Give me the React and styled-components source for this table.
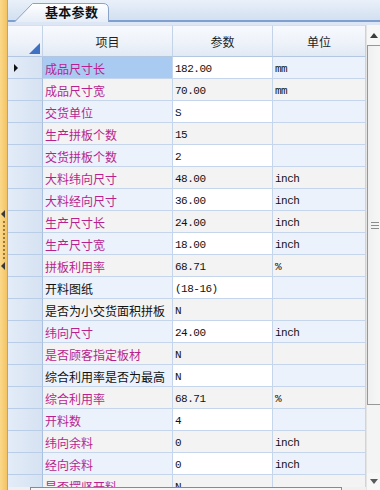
import React from "react";
import styled, { createGlobalStyle } from "styled-components";

const Global = createGlobalStyle`
  html, body { margin: 0; padding: 0; background: #fff; }
  body { font-family: "Noto Sans CJK SC", "Liberation Sans", sans-serif; }
`;

const Root = styled.div`
  width: 380px;
  height: 490px;
  display: flex;
  overflow: hidden;
`;

const Splitter = styled.div`
  flex: none;
  width: 7px;
  border-right: 1px solid #cfa24c;
  background: linear-gradient(to right, #fbd98a, #f3c363);
  display: flex;
  flex-direction: column;
  align-items: center;
  justify-content: center;
  gap: 3px;
  padding-bottom: 11px;
  box-sizing: content-box;
`;

const SplitArrow = styled.div`
  width: 0;
  height: 0;
  border-top: 4px solid transparent;
  border-bottom: 4px solid transparent;
  border-right: 4px solid #3a3a3a;
  margin-left: -1px;
`;

const Grip = styled.div`
  width: 0;
  height: 38px;
  border-left: 2px dotted #9a7a3a;
`;

const Main = styled.div`
  flex: none;
  width: 375px;
  display: flex;
  flex-direction: column;
`;

const TabStrip = styled.div`
  flex: none;
  height: 20px;
  border-bottom: 2px solid #7fa0cf;
  background: linear-gradient(to bottom, #e9f0f9, #d3e0f1);
  display: flex;
  align-items: flex-end;
  padding-left: 6px;
`;

const Tab = styled.div`
  position: relative;
  width: 96px;
  height: 19px;
  display: flex;
  align-items: center;
  padding-left: 31px;
  box-sizing: border-box;
  font-size: 13px;
  font-weight: 700;
  color: #111;
  margin-bottom: -1px;
`;

const TabShape = styled.svg`
  position: absolute;
  left: 0;
  top: 0;
  width: 96px;
  height: 20px;
`;

const TabLabel = styled.span`
  position: relative;
  line-height: 19px;
  letter-spacing: 0.3px;
`;

const Panel = styled.div`
  flex: 1;
  min-height: 0;
  display: flex;
  padding-top: 3px;
  background: #dce6f4;
`;

const GridWrap = styled.div`
  flex: none;
  width: 358px;
  display: flex;
  flex-direction: column;
  background: #fff;
`;

const GridBody = styled.div`
  flex: 1;
  min-height: 0;
  overflow: hidden;
  display: grid;
  grid-template-columns: 35px 130px 100px 93px;
  grid-auto-rows: 22px;
  grid-template-rows: 32px;
`;

const HeadCell = styled.div`
  box-sizing: border-box;
  border-right: 1px solid #c3d3e8;
  border-bottom: 1px solid #b3c7e1;
  border-top: 1px solid #d6e0ec;
  background: linear-gradient(to bottom, #f7f9fd 0%, #edf2f9 60%, #e1e9f4 100%);
  display: flex;
  align-items: center;
  justify-content: center;
  font-size: 12px;
  color: #1e1e1e;
  position: relative;
`;

const CornerMark = styled.div`
  position: absolute;
  right: 2px;
  bottom: 2px;
  width: 0;
  height: 0;
  border-left: 11px solid transparent;
  border-bottom: 11px solid #3f72c2;
`;

const Indicator = styled.div`
  box-sizing: border-box;
  border-right: 1px solid #a9c0de;
  border-bottom: 1px solid #b9cde6;
  background: linear-gradient(to right, #e3ecf8, #d6e2f2);
  display: flex;
  align-items: center;
  padding-left: 6px;
`;

const RowMark = styled.div`
  width: 0;
  height: 0;
  border-top: 4px solid transparent;
  border-bottom: 4px solid transparent;
  border-left: 4px solid #111;
`;

const Cell = styled.div`
  box-sizing: border-box;
  border-right: 1px solid #c5d6ec;
  border-bottom: 1px solid #c5d6ec;
  background: ${(p) => p.$bg};
  display: flex;
  align-items: center;
  padding-left: 2px;
  padding-top: 2px;
  white-space: nowrap;
  overflow: hidden;
`;

const NameText = styled.span`
  font-size: 12px;
  color: ${(p) => (p.$plain ? "#111" : "#b81f8f")};
  line-height: 1;
`;

const MonoText = styled.span`
  font-family: "Liberation Mono", "DejaVu Sans Mono", monospace;
  font-size: 11px;
  letter-spacing: -0.5px;
  color: #111;
`;

const HScroll = styled.div`
  flex: none;
  height: 3px;
  display: flex;
  background: #f0f0f0;
`;

const HThumb = styled.div`
  margin-left: 22px;
  width: 310px;
  border-top: 1px solid #8a8a8a;
  border-left: 1px solid #8a8a8a;
  border-right: 1px solid #8a8a8a;
  background: #f6f6f6;
`;

const VScroll = styled.div`
  flex: none;
  width: 17px;
  display: flex;
  flex-direction: column;
  background: #f2f2f2;
  border-left: 1px solid #e4e4e4;
  box-sizing: border-box;
`;

const ArrowBtn = styled.div`
  flex: none;
  height: ${(p) => p.$h}px;
  display: flex;
  align-items: center;
  justify-content: center;
  background: #f7f7f7;
`;

const Tri = styled.div`
  width: 0;
  height: 0;
  border-left: 4px solid transparent;
  border-right: 4px solid transparent;
  ${(p) =>
    p.$up
      ? "border-bottom: 5px solid #3c3c3c;"
      : "border-top: 5px solid #5a5a5a;"}
  margin-right: 2px;
`;

const Thumb = styled.div`
  flex: none;
  height: 360px;
  box-sizing: border-box;
  border: 1px solid #979797;
  border-right: none;
  background: linear-gradient(to right, #f0f0f0, #f8f8f8);
  display: flex;
  align-items: center;
  justify-content: center;
`;

const GripLines = styled.div`
  width: 8px;
  height: 5px;
  border-top: 1px solid #8c8c8c;
  border-bottom: 1px solid #8c8c8c;
  position: relative;
  margin-right: 2px;
  &::after {
    content: "";
    position: absolute;
    left: 0;
    right: 0;
    top: 2px;
    border-top: 1px solid #8c8c8c;
  }
`;

const Track = styled.div`
  flex: 1;
  background: #f4f4f4;
`;

const rows = [
  ["成品尺寸长", "182.00", "mm"],
  ["成品尺寸宽", "70.00", "mm"],
  ["交货单位", "S", ""],
  ["生产拼板个数", "15", ""],
  ["交货拼板个数", "2", ""],
  ["大料纬向尺寸", "48.00", "inch"],
  ["大料经向尺寸", "36.00", "inch"],
  ["生产尺寸长", "24.00", "inch"],
  ["生产尺寸宽", "18.00", "inch"],
  ["拼板利用率", "68.71", "%"],
  ["开料图纸", "(18-16)", "", true],
  ["是否为小交货面积拼板", "N", "", true],
  ["纬向尺寸", "24.00", "inch"],
  ["是否顾客指定板材", "N", ""],
  ["综合利用率是否为最高", "N", "", true],
  ["综合利用率", "68.71", "%"],
  ["开料数", "4", ""],
  ["纬向余料", "0", "inch"],
  ["经向余料", "0", "inch"],
  ["是否摆竖开料", "N", ""],
];

export default function App() {
  return (
    <>
      <Global />
      <Root>
        <Splitter>
          <SplitArrow />
          <Grip />
          <SplitArrow />
        </Splitter>
        <Main>
          <TabStrip>
            <Tab>
              <TabShape viewBox="0 0 96 20">
                <defs>
                  <linearGradient id="tabg" x1="0" y1="0" x2="0" y2="1">
                    <stop offset="0" stopColor="#ffffff" />
                    <stop offset="1" stopColor="#e6edf7" />
                  </linearGradient>
                </defs>
                <path
                  d="M0.5 20 L18.5 1.5 H89 Q94.5 1.5 94.5 7 V20"
                  fill="url(#tabg)"
                  stroke="#8aa3c6"
                  strokeWidth="1"
                />
              </TabShape>
              <TabLabel>基本参数</TabLabel>
            </Tab>
          </TabStrip>
          <Panel>
            <GridWrap>
              <GridBody>
                <HeadCell>
                  <CornerMark />
                </HeadCell>
                <HeadCell>项目</HeadCell>
                <HeadCell>参数</HeadCell>
                <HeadCell>单位</HeadCell>
                {rows.map(([name, val, unit, plain], i) => {
                  const odd = i % 2 === 0;
                  const side = odd ? "#ebf2fc" : "#f3f3f3";
                  const mid = odd ? "#ffffff" : "#f3f3f3";
                  const nameBg = i === 0 ? "#a9caf1" : side;
                  return (
                    <React.Fragment key={name}>
                      <Indicator>{i === 0 && <RowMark />}</Indicator>
                      <Cell $bg={nameBg}>
                        <NameText $plain={plain}>{name}</NameText>
                      </Cell>
                      <Cell $bg={mid}>
                        <MonoText>{val}</MonoText>
                      </Cell>
                      <Cell $bg={side}>
                        <MonoText>{unit}</MonoText>
                      </Cell>
                    </React.Fragment>
                  );
                })}
              </GridBody>
              <HScroll>
                <HThumb />
              </HScroll>
            </GridWrap>
            <VScroll>
              <ArrowBtn $h={20}>
                <Tri $up />
              </ArrowBtn>
              <Thumb>
                <GripLines />
              </Thumb>
              <Track />
              <ArrowBtn $h={17}>
                <Tri />
              </ArrowBtn>
            </VScroll>
          </Panel>
        </Main>
      </Root>
    </>
  );
}
